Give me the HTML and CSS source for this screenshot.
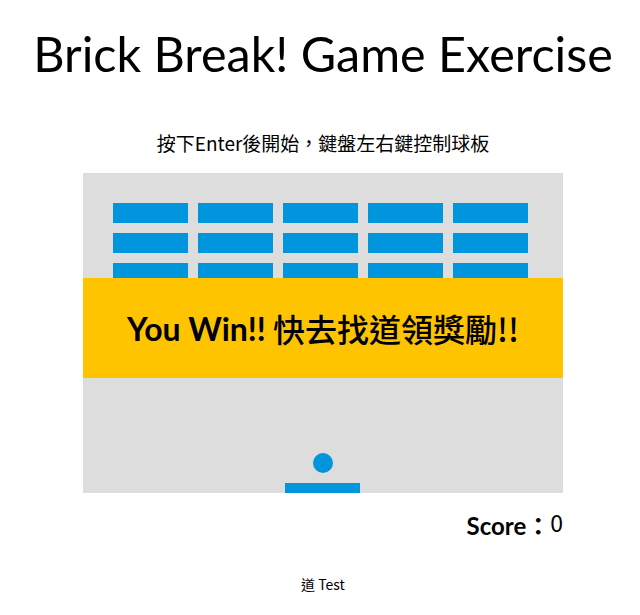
FILE: index.html
```html
<!DOCTYPE html>
<html lang="zh-Hant">
<head>
<meta charset="utf-8">
<link rel="stylesheet" href="styles.css">
</head>
<body>
<div class="page">
  <h1 class="title">Brick Break! Game Exercise</h1>
  <p class="hint">按下Enter後開始，鍵盤左右鍵控制球板</p>
  <div class="board">
    <div class="bricks">
      <div class="brick"></div><div class="brick"></div><div class="brick"></div><div class="brick"></div><div class="brick"></div>
      <div class="brick"></div><div class="brick"></div><div class="brick"></div><div class="brick"></div><div class="brick"></div>
      <div class="brick"></div><div class="brick"></div><div class="brick"></div><div class="brick"></div><div class="brick"></div>
    </div>
    <div class="banner"><span class="banner-en">You Win!!</span>&nbsp;<span class="banner-zh">快去找道領獎勵!!</span></div>
    <div class="ball"></div>
    <div class="paddle"></div>
  </div>
  <div class="score"><span class="score-label">Score：</span><span class="score-value">0</span></div>
  <p class="footer">道 Test</p>
</div>
</body>
</html>
```
FILE: styles.css
```css
html, body {
  margin: 0;
  padding: 0;
  background: #fff;
}
body {
  font-family: "Noto Sans CJK TC", sans-serif;
  color: #000;
}
.page {
  width: 480px;
  margin: 0 auto;
  padding-left: 6px;
  display: flex;
  flex-direction: column;
  align-items: center;
}
.title {
  margin: 24px 0 0;
  font-family: Lato, "Noto Sans CJK TC", sans-serif;
  font-size: 48.5px;
  font-weight: 400;
  line-height: 58px;
  white-space: nowrap;
}
.hint {
  margin: 49px 0 0;
  font-size: 19px;
  line-height: 24px;
  white-space: nowrap;
}
.board {
  position: relative;
  margin-top: 18px;
  width: 480px;
  height: 320px;
  background: #dddddd;
}
.bricks {
  display: grid;
  grid-template-columns: repeat(5, 75px);
  grid-auto-rows: 20px;
  gap: 10px;
  padding: 30px 0 0 30px;
}
.brick {
  background: #0095dd;
}
.banner {
  position: absolute;
  left: 0;
  top: 105px;
  width: 480px;
  height: 100px;
  background: #ffc400;
  display: flex;
  align-items: center;
  justify-content: center;
  font-size: 32px;
  white-space: nowrap;
}
.banner-en {
  font-family: Lato, sans-serif;
  font-weight: 700;
}
.banner-zh {
  font-family: "Noto Sans CJK TC", sans-serif;
  font-weight: 500;
}
.ball {
  position: absolute;
  left: 230px;
  top: 280px;
  width: 20px;
  height: 20px;
  border-radius: 50%;
  background: #0095dd;
}
.paddle {
  position: absolute;
  left: 202px;
  top: 310px;
  width: 75px;
  height: 10px;
  background: #0095dd;
}
.score {
  align-self: flex-end;
  margin-top: 18px;
  display: flex;
  align-items: flex-start;
}
.score-label {
  font-family: Lato, "Noto Sans CJK TC", sans-serif;
  font-size: 24px;
  font-weight: 700;
  line-height: 30px;
}
.score-value {
  font-size: 23px;
  line-height: 22px;
}
.footer {
  margin: 33px 0 0;
  font-size: 14px;
  line-height: 20px;
}
```
